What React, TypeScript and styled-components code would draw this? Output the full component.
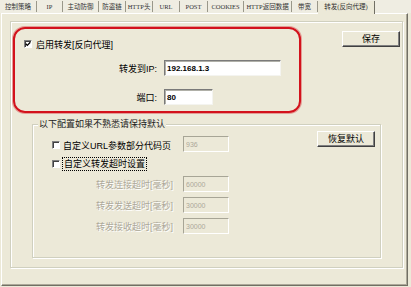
import React from 'react'
import styled, { createGlobalStyle } from 'styled-components'

const GlobalStyle = createGlobalStyle`
  html, body {
    margin: 0;
    padding: 0;
    background: #ece9d8;
  }
  body {
    font-family: "Liberation Sans", "Noto Sans CJK SC", sans-serif;
    font-size: 9px;
    color: #000;
  }
`

const tabs = [
  { label: '控制策略', width: 37 },
  { label: 'IP', width: 26 },
  { label: '主动防御', width: 36 },
  { label: '防盗链', width: 27 },
  { label: 'HTTP头', width: 27 },
  { label: 'URL', width: 27 },
  { label: 'POST', width: 28 },
  { label: 'COOKIES', width: 36 },
  { label: 'HTTP返回数据', width: 48 },
  { label: '带宽', width: 26 },
  { label: '转发(反向代理)', width: 57, active: true },
]

const App = () => {
  return (
    <Window>
      <GlobalStyle />
      <TabStrip>
        {tabs.map((t) => (
          <Tab key={t.label} $width={t.width} $active={!!t.active}>
            {t.label}
          </Tab>
        ))}
      </TabStrip>
      <Page>
        <OuterGroup>
          <TopRow>
            <Highlight>
              <CheckRow>
                <Checkbox checked />
                <span>启用转发[反向代理]</span>
              </CheckRow>
              <FieldGrid>
                <FieldLabel>转发到IP:</FieldLabel>
                <TextBox $width={117} $bold readOnly defaultValue="192.168.1.3" />
                <FieldLabel>端口:</FieldLabel>
                <TextBox $width={49} $bold readOnly defaultValue="80" />
              </FieldGrid>
            </Highlight>
            <SaveButton>保存</SaveButton>
          </TopRow>

          <InnerGroup>
            <Legend>以下配置如果不熟悉请保持默认</Legend>
            <OptionsGrid>
              <OptionCheck>
                <Checkbox />
                <span>自定义URL参数部分代码页</span>
              </OptionCheck>
              <DisabledBox readOnly defaultValue="936" />
              <span />
              <ResetButton>恢复默认</ResetButton>

              <OptionCheck>
                <Checkbox />
                <Focused>自定义转发超时设置</Focused>
              </OptionCheck>
              <span />
              <span />
              <span />

              <DisabledLabel>转发连接超时[毫秒]</DisabledLabel>
              <DisabledBox readOnly defaultValue="60000" />
              <span />
              <span />

              <DisabledLabel>转发发送超时[毫秒]</DisabledLabel>
              <DisabledBox readOnly defaultValue="30000" />
              <span />
              <span />

              <DisabledLabel>转发接收超时[毫秒]</DisabledLabel>
              <DisabledBox readOnly defaultValue="30000" />
            </OptionsGrid>
          </InnerGroup>
        </OuterGroup>
      </Page>
    </Window>
  )
}

const Checkbox = ({ checked }: { checked?: boolean }) => (
  <CheckBoxFrame>
    {checked && (
      <svg width="6" height="6" viewBox="0 0 6 6">
        <path d="M0.8 2.8 L2.3 4.4 L5.3 1.2" fill="none" stroke="#000" strokeWidth="1.3" />
      </svg>
    )}
  </CheckBoxFrame>
)

const Window = styled.div`
  width: 411px;
  height: 287px;
  display: flex;
  flex-direction: column;
  overflow: hidden;
  background: #ece9d8;
`

const TabStrip = styled.div`
  height: 13px;
  display: flex;
  align-items: flex-end;
  background: #efede2;
  font-family: "Liberation Serif", "Noto Sans CJK SC", serif;
  font-size: 6.5px;
  color: #333;
`

const Tab = styled.div<{ $width: number; $active: boolean }>`
  width: ${(p) => p.$width}px;
  box-sizing: border-box;
  height: ${(p) => (p.$active ? 13 : 11)}px;
  margin-bottom: ${(p) => (p.$active ? -1 : 1)}px;
  display: flex;
  align-items: center;
  justify-content: center;
  white-space: nowrap;
  padding-bottom: ${(p) => (p.$active ? 3 : 1)}px;
  border-right: 1px solid ${(p) => (p.$active ? '#716f64' : '#9a988a')};
  background: ${(p) => (p.$active ? '#ece9d8' : 'transparent')};
  position: relative;
  z-index: ${(p) => (p.$active ? 1 : 0)};
`

const Page = styled.div`
  margin: 0 3px 1px 1px;
  flex: 1;
  box-sizing: border-box;
  border: 1px solid;
  border-color: #fff #716f64 #716f64 #fff;
  box-shadow: inset -1px -1px 0 #aca899;
  padding: 7px 0 0 8px;
`

const OuterGroup = styled.div`
  width: 393px;
  height: 247px;
  box-sizing: border-box;
  border: 1px solid #d0d0bf;
  box-shadow: inset 1px 1px 0 #fff, 1px 1px 0 #fff;
  display: flex;
  flex-direction: column;
`

const TopRow = styled.div`
  display: flex;
  align-items: flex-start;
  padding: 5px 0 0 2px;
`

const Highlight = styled.div`
  width: 288px;
  box-sizing: border-box;
  border: 2px solid #d3121c;
  box-shadow: 0 0 0 1px rgba(211, 18, 28, 0.35);
  border-radius: 12px;
  padding: 9px 0 6px 0;
`

const CheckRow = styled.div`
  display: flex;
  align-items: center;
  gap: 4px;
  height: 12px;
  padding-left: 9px;
`

const CheckBoxFrame = styled.span`
  width: 8px;
  height: 8px;
  box-sizing: border-box;
  flex: none;
  display: inline-flex;
  align-items: center;
  justify-content: center;
  background: #fff;
  border: 1px solid;
  border-color: #808080 #fff #fff #808080;
  box-shadow: inset 1px 1px 0 #404040;
`

const FieldGrid = styled.div`
  margin-top: 10px;
  display: grid;
  grid-template-columns: 142px auto;
  grid-auto-rows: 16px;
  column-gap: 7px;
  row-gap: 13px;
  align-items: center;
`

const FieldLabel = styled.span`
  text-align: right;
  white-space: nowrap;
`

const TextBox = styled.input<{ $width: number; $bold?: boolean }>`
  width: ${(p) => p.$width}px;
  height: 16px;
  box-sizing: border-box;
  margin: 0;
  padding: 0 2px;
  background: #fff;
  border: 1px solid;
  border-color: #7a7a7a #f4f4f0 #f4f4f0 #7a7a7a;
  box-shadow: inset 1px 1px 0 #b0b0a8;
  font-family: "Liberation Sans", sans-serif;
  font-size: 8px;
  font-weight: ${(p) => (p.$bold ? 700 : 400)};
  color: #000;
  outline: none;
`

const BaseButton = styled.button`
  width: 58px;
  height: 16px;
  box-sizing: border-box;
  margin: 0;
  padding: 0;
  background: #ece9d8;
  border: 1px solid;
  border-color: #fff #404040 #404040 #fff;
  box-shadow: inset -1px -1px 0 #808080;
  font-family: "Liberation Sans", "Noto Sans CJK SC", sans-serif;
  font-size: 9px;
  color: #000;
  line-height: 1;
`

const SaveButton = styled(BaseButton)`
  margin: 4px 0 0 41px;
`

const ResetButton = styled(BaseButton)`
  align-self: start;
`

const InnerGroup = styled.div`
  margin: 11px 0 0 21px;
  width: 349px;
  height: 134px;
  box-sizing: border-box;
  border: 1px solid #d0d0bf;
  box-shadow: inset 1px 1px 0 #fff, 1px 1px 0 #fff;
  display: flex;
  flex-direction: column;
`

const Legend = styled.span`
  align-self: flex-start;
  margin: -6px 0 0 5px;
  padding: 0 1px;
  line-height: 11px;
  background: #ece9d8;
  color: #222;
`

const OptionsGrid = styled.div`
  margin-top: 1px;
  padding-right: 5px;
  display: grid;
  grid-template-columns: 150px 46px 1fr 58px;
  grid-template-rows: 21px 14px 16px 16px 16px;
  row-gap: 5px;
  align-items: end;
`

const OptionCheck = styled.div`
  display: flex;
  align-items: center;
  gap: 3px;
  height: 14px;
  padding-left: 19px;
  white-space: nowrap;
`

const Focused = styled.span`
  outline: 1px dotted #000;
  line-height: 12px;
  padding: 0 1px;
`

const DisabledLabel = styled.span`
  align-self: center;
  text-align: right;
  padding-right: 10px;
  white-space: nowrap;
  color: #aca899;
  text-shadow: 1px 1px 0 #fff;
`

const DisabledBox = styled.input`
  width: 46px;
  height: 16px;
  box-sizing: border-box;
  margin: 0;
  padding: 0 2px;
  background: #ece9d8;
  border: 1px solid;
  border-color: #a7a596 #fff #fff #a7a596;
  font-family: "Liberation Sans", sans-serif;
  font-size: 7px;
  color: #aca899;
  outline: none;
`

export default App
